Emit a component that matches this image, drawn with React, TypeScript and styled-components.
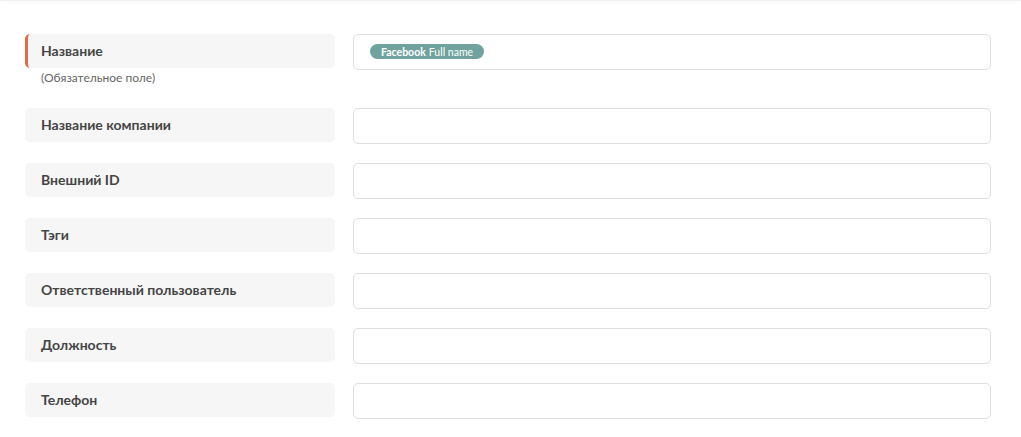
import React from 'react'
import styled, { createGlobalStyle } from 'styled-components'

const GlobalStyle = createGlobalStyle`
  html, body {
    margin: 0;
    padding: 0;
    background: #ffffff;
    font-family: Lato, 'Noto Sans', 'Liberation Sans', sans-serif;
  }
`

const Page = styled.div`
  width: 1021px;
  min-height: 437px;
  background: #fff;
`

const HeaderShadow = styled.div`
  height: 1px;
  background: #f2f2f2;
  box-shadow: 0 1px 3px rgba(0, 0, 0, 0.08);
`

const Form = styled.form`
  display: flex;
  flex-direction: column;
  gap: 19px;
  padding: 33px 30px 0 25px;
`

const Row = styled.div`
  display: grid;
  grid-template-columns: 310px 638px;
  column-gap: 18px;
  align-items: start;
`

const LabelCol = styled.div`
  display: flex;
  flex-direction: column;
`

const Label = styled.div<{ $required?: boolean }>`
  height: 34px;
  display: flex;
  align-items: center;
  box-sizing: border-box;
  padding-bottom: 2px;
  background: #f6f6f6;
  border-radius: 5px;
  border-left: ${(p) => (p.$required ? '3px solid #e2694b' : 'none')};
  padding-left: ${(p) => (p.$required ? '13px' : '16px')};
  font-size: 14px;
  font-weight: 700;
  color: #454545;
`

const Hint = styled.div`
  margin: 3px 0 4px 16px;
  font-size: 12px;
  line-height: 14px;
  color: #666;
`

const Field = styled.div`
  height: 36px;
  box-sizing: border-box;
  border: 1px solid #dedede;
  border-radius: 5px;
  background: #fff;
  display: flex;
  align-items: center;
  padding-left: 16px;
`

const Chip = styled.span`
  display: inline-flex;
  align-items: center;
  height: 15px;
  padding: 0 11px;
  border-radius: 8px;
  background: #70a39d;
  color: #fff;
  font-size: 10.5px;
  margin-top: -1px;

  b {
    font-weight: 700;
    margin-right: 3px;
  }
`

const fields = [
  'Название компании',
  'Внешний ID',
  'Тэги',
  'Ответственный пользователь',
  'Должность',
  'Телефон',
]

export default function App() {
  return (
    <Page>
      <GlobalStyle />
      <HeaderShadow />
      <Form>
        <Row>
          <LabelCol>
            <Label $required>Название</Label>
            <Hint>(Обязательное поле)</Hint>
          </LabelCol>
          <Field>
            <Chip>
              <b>Facebook</b>Full name
            </Chip>
          </Field>
        </Row>
        {fields.map((f) => (
          <Row key={f}>
            <LabelCol>
              <Label>{f}</Label>
            </LabelCol>
            <Field />
          </Row>
        ))}
      </Form>
    </Page>
  )
}
